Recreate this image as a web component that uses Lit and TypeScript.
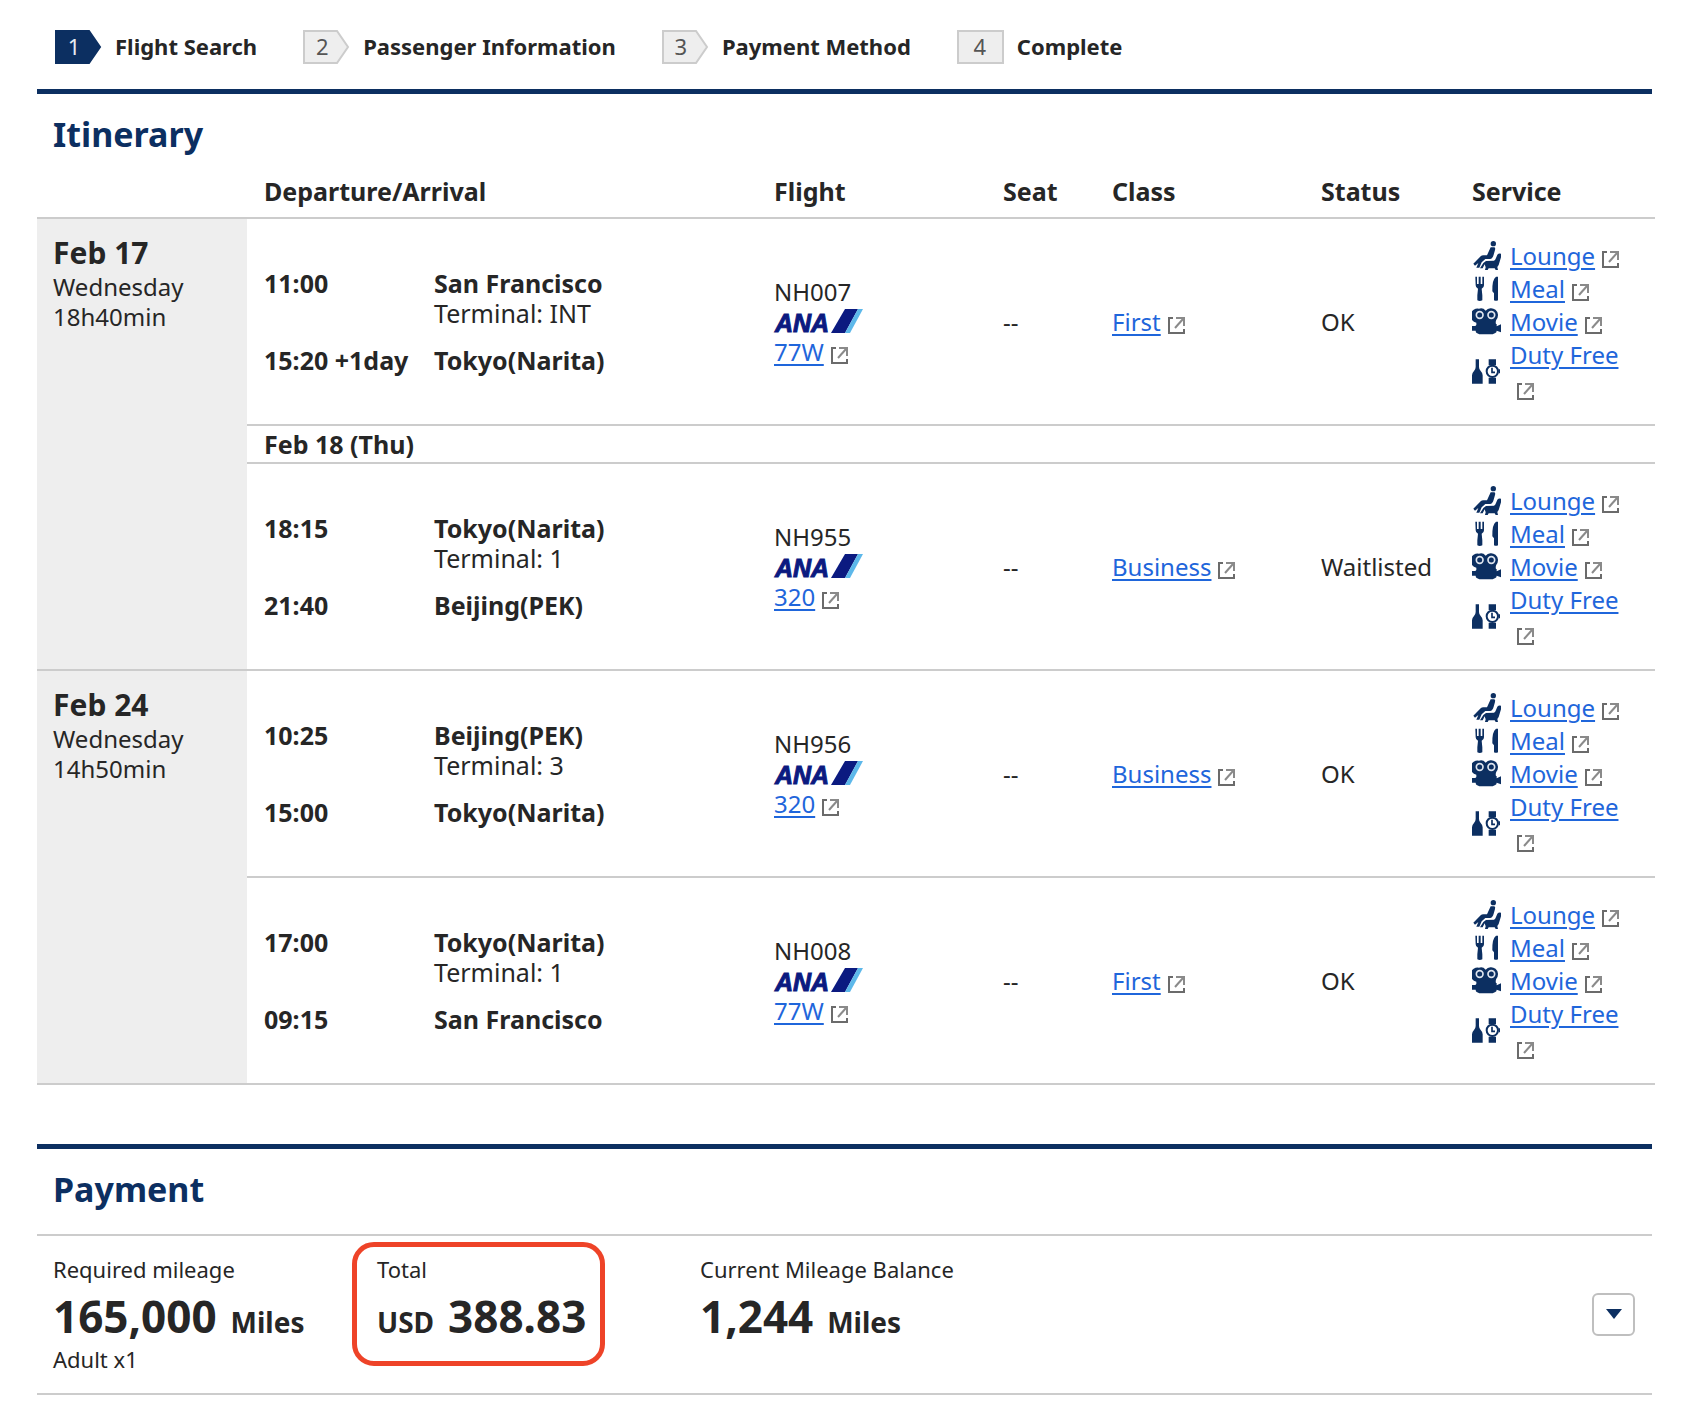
import { LitElement, html, css, svg, nothing } from "lit";
import { customElement, property } from "lit/decorators.js";

type IconName = "lounge" | "meal" | "movie" | "duty";

interface Flight {
  note?: string;
  depTime: string;
  depCity: string;
  terminal: string;
  arrTime: string;
  arrCity: string;
  number: string;
  aircraft: string;
  cabin: string;
  status: string;
}

interface Day {
  date: string;
  weekday: string;
  duration: string;
  flights: Flight[];
}

const STEPS = ["Flight Search", "Passenger Information", "Payment Method", "Complete"];

const SERVICES: { icon: IconName; label: string }[] = [
  { icon: "lounge", label: "Lounge" },
  { icon: "meal", label: "Meal" },
  { icon: "movie", label: "Movie" },
  { icon: "duty", label: "Duty Free" },
];

const DAYS: Day[] = [
  {
    date: "Feb 17", weekday: "Wednesday", duration: "18h40min",
    flights: [
      { depTime: "11:00", depCity: "San Francisco", terminal: "INT", arrTime: "15:20 +1day", arrCity: "Tokyo(Narita)", number: "NH007", aircraft: "77W", cabin: "First", status: "OK" },
      { note: "Feb 18 (Thu)", depTime: "18:15", depCity: "Tokyo(Narita)", terminal: "1", arrTime: "21:40", arrCity: "Beijing(PEK)", number: "NH955", aircraft: "320", cabin: "Business", status: "Waitlisted" },
    ],
  },
  {
    date: "Feb 24", weekday: "Wednesday", duration: "14h50min",
    flights: [
      { depTime: "10:25", depCity: "Beijing(PEK)", terminal: "3", arrTime: "15:00", arrCity: "Tokyo(Narita)", number: "NH956", aircraft: "320", cabin: "Business", status: "OK" },
      { depTime: "17:00", depCity: "Tokyo(Narita)", terminal: "1", arrTime: "09:15", arrCity: "San Francisco", number: "NH008", aircraft: "77W", cabin: "First", status: "OK" },
    ],
  },
];

/* Service pictograms, drawn on an 87 x 87 grid. */
const ICONS = {
  lounge: svg`
    <circle cx="64" cy="8" r="8"/>
    <path d="M56 19H67Q71 21 69 27L65 41Q62 53 54 54H40L29 64L22 80H13L19 66L9 74L4 68L26 46Q29 43 34 43H45Z"/>
    <path d="M24 82L34 66L42 60L66 59Q70 57 72 51L76 41Q80 36 87 38V49L80 72L76 78L78 87H71L68 82H50L47 87H39L41 79L38 70L32 82Z"/>`,
  meal: svg`
    <path d="M10 8h5v22h5V8h6v22h5V8h5v26q0 8-7 10l2 20v15q-8 4-15 0V64l2-20q-7-2-7-10z"/>
    <path d="M78 8v71q-6 3-12 0V58l-5-6Q60 16 72 8z"/>`,
  movie: svg`
    <path d="M21 5a19 19 0 0 1 20 6A19 19 0 1 1 73 38q-3 6-1 13h2v7l13-6v24l-13-5q0 5-4 7l-8 4H22l-8-4q-3-2-3-7H0V57h10l3-3v-7A21 21 0 0 1 21 5z"/>
    <circle cx="23" cy="24" r="10" fill="none" stroke="#dfe5ee" stroke-width="5"/>
    <circle cx="58" cy="24" r="10" fill="none" stroke="#dfe5ee" stroke-width="5"/>`,
  duty: svg`
    <path d="M11 7h10v23q0 7 5 12q6 6 6 13v25H0V55q0-7 6-13q5-5 5-12z"/>
    <path d="M50 7h22v18H50zM50 62h22v18H50z"/>
    <circle cx="61" cy="43" r="17" fill="#fff" stroke="#0c2f61" stroke-width="6"/>
    <path d="M80 37h4v12h-4z"/>
    <path d="M60 32v14h9" fill="none" stroke="#0c2f61" stroke-width="5"/>`,
};

@customElement("service-icon")
class ServiceIcon extends LitElement {
  static styles = css`
    :host { display: block; flex: none; width: 29px; height: 29px; }
    .glyph { display: block; width: 29px; height: 29px; fill: #0c2f61; }
  `;
  @property() name: IconName = "lounge";
  render() {
    return html`<svg class="glyph" viewBox="0 0 87 87" aria-hidden="true">${ICONS[this.name]}</svg>`;
  }
}

@customElement("ext-link")
class ExtLink extends LitElement {
  static styles = css`
    :host { display: inline; }
    .link { color: #1f66db; text-decoration: underline; text-decoration-thickness: 2px; text-underline-offset: 3px; }
    .mark { display: inline-block; width: 17px; height: 17px; margin-left: 7px; vertical-align: -3px; }
  `;
  @property() label = "";
  render() {
    return html`<a class="link" href="#">${this.label}</a><svg class="mark" viewBox="0 0 17 17" fill="none" aria-hidden="true">
      <path d="M5 1H1v15h15v-4" stroke="#6b6b6b" stroke-width="2"/>
      <path d="M8 1h8v8" stroke="#8a8a8a" stroke-width="2"/>
      <path d="M7 11l8-9" stroke="#8a8a8a" stroke-width="2"/>
    </svg>`;
  }
}

@customElement("app-root")
class AppRoot extends LitElement {
  static styles = css`
    :host {
      display: block;
      background: #fff;
      color: #262626;
      font-family: "Noto Sans", "Open Sans", sans-serif;
      font-size: 24px;
      line-height: 30px;
    }
    .page { padding: 30px 35px 8px 37px; }

    .steps { display: flex; gap: 46px; margin: 0 3px 25px 0; padding: 0 18px; list-style: none; font-size: 22px; font-weight: 700; }
    .step { display: flex; align-items: center; gap: 13px; height: 34px; line-height: 32px; }
    .badge { position: relative; width: 47px; height: 34px; display: flex; }
    .badge-shape { position: absolute; inset: 0; fill: #eee; stroke: #ccc; stroke-width: 2; }
    .badge-num { position: relative; width: 38px; text-align: center; font-weight: 400; color: #555; }
    .step.current .badge-shape { fill: #0c2f61; stroke: #0c2f61; }
    .step.current .badge-num { color: #e6ebf2; }
    .step:last-child .badge-num { width: 46px; }
    .step-label { padding-bottom: 2px; }

    .section { border-top: 5px solid #0c2f61; margin-right: 3px; }
    .title { margin: 0; padding: 17px 16px 0; font-size: 34px; line-height: 46px; color: #0c2f61; }

    .itinerary { width: 100%; table-layout: fixed; border-collapse: separate; border-spacing: 0; margin-bottom: 59px; }
    .c-day { width: 210px; }
    .c-flight { width: 229px; }
    .c-seat { width: 109px; }
    .c-class { width: 209px; }
    .c-status { width: 151px; }
    .c-service { width: 200px; }
    .itinerary th, .itinerary td { padding: 0 0 0 17px; text-align: left; border-bottom: 2px solid #ccc; }
    .itinerary .head { padding-top: 18px; padding-bottom: 10px; font-size: 25px; line-height: 32px; }
    .itinerary .day { padding: 15px 16px; background: #eee; vertical-align: top; font-weight: 400; }
    .date { display: block; font-size: 30px; line-height: 38px; font-weight: 700; }
    .line { display: block; }
    .itinerary .note { font-size: 25px; line-height: 36px; font-weight: 700; }
    .itinerary .service { padding: 20px 18px 20px 17px; }

    .legs { display: grid; grid-template-columns: 170px 1fr; row-gap: 17px; font-size: 25px; }
    .strong { font-weight: 700; white-space: nowrap; }
    .ana { display: block; width: 89px; height: 24px; margin: 2px 0 4px; overflow: visible; }
    .ana-text { font: italic 700 25px "Liberation Sans", sans-serif; }

    .services { margin: 0; padding: 0; list-style: none; line-height: 33px; }
    .service-row { display: flex; align-items: center; gap: 9px; }

    .summary { display: flex; align-items: center; border: solid #ccc; border-width: 2px 0; margin-top: 22px; padding: 18px 17px 19px 16px; }
    .figures { flex: 1; display: grid; grid-template-columns: 324px 323px 1fr; align-items: start; margin: 0; font-size: 22px; }
    .figure { justify-self: start; position: relative; }
    .figure dt { margin: 0; }
    .figure dd { margin: 0; }
    .figure .amount { display: flex; align-items: baseline; gap: 14px; margin: 8px 0 4px; font-weight: 700; font-size: 28px; line-height: 30px; white-space: nowrap; }
    .figure .ring { position: absolute; inset: -12px -19px -22px -25px; border: 5px solid #ee4328; border-radius: 22px; pointer-events: none; }
    .big { font-size: 44px; line-height: 48px; }
    .toggle { width: 43px; height: 43px; padding: 0; display: grid; place-items: center; background: #fff; border: 2px solid #bfbfbf; border-radius: 6px; }
    .caret { width: 16px; height: 10px; fill: #0c2f61; }
  `;

  private renderStep(label: string, i: number) {
    const last = i === STEPS.length - 1;
    return html`<li class="step ${i === 0 ? "current" : ""}">
      <span class="badge">
        <svg class="badge-shape" viewBox="0 0 47 34" width="47" height="34" aria-hidden="true">
          <path d=${last ? "M1 1H46V33H1Z" : "M1 1H34L45 17L34 33H1Z"}/>
        </svg>
        <span class="badge-num">${i + 1}</span>
      </span>
      <span class="step-label">${label}</span>
    </li>`;
  }

  private renderFlight(f: Flight) {
    return html`
      <td>
        <div class="legs">
          <span class="strong">${f.depTime}</span>
          <span><span class="line strong">${f.depCity}</span><span class="line">Terminal: ${f.terminal}</span></span>
          <span class="strong">${f.arrTime}</span>
          <span class="strong">${f.arrCity}</span>
        </div>
      </td>
      <td>
        <span class="line">${f.number}</span>
        <svg class="ana" viewBox="0 0 89 24" role="img" aria-label="ANA">
          <text class="ana-text" x="1" y="23" fill="#0b1a80" stroke="#0b1a80" stroke-width="1">ANA</text>
          <path d="M71 0H84L71 24H57Z" fill="#0b1a80"/>
          <path d="M84 0H89L76 24H71Z" fill="#5db8ea"/>
        </svg>
        <span class="line"><ext-link label=${f.aircraft}></ext-link></span>
      </td>
      <td>--</td>
      <td><ext-link label=${f.cabin}></ext-link></td>
      <td>${f.status}</td>
      <td class="service">
        <ul class="services">
          ${SERVICES.map((s) => html`<li class="service-row"><service-icon name=${s.icon}></service-icon><span><ext-link label=${s.label}></ext-link></span></li>`)}
        </ul>
      </td>`;
  }

  private renderDay(d: Day) {
    const span = d.flights.reduce((n, f) => n + (f.note ? 2 : 1), 0);
    return html`<tbody>${d.flights.map((f, i) => html`
      ${f.note ? html`<tr><td class="note" colspan="6">${f.note}</td></tr>` : nothing}
      <tr>
        ${i === 0 ? html`<th class="day" scope="rowgroup" rowspan=${span}>
          <span class="date">${d.date}</span><span class="line">${d.weekday}</span><span class="line">${d.duration}</span>
        </th>` : nothing}
        ${this.renderFlight(f)}
      </tr>`)}</tbody>`;
  }

  render() {
    return html`<main class="page">
      <ol class="steps">${STEPS.map((s, i) => this.renderStep(s, i))}</ol>

      <section>
        <div class="section"><h2 class="title">Itinerary</h2></div>
        <table class="itinerary">
          <colgroup>
            <col class="c-day"><col><col class="c-flight"><col class="c-seat"><col class="c-class"><col class="c-status"><col class="c-service">
          </colgroup>
          <thead><tr>
            <th class="head"></th>
            ${["Departure/Arrival", "Flight", "Seat", "Class", "Status", "Service"].map((h) => html`<th class="head" scope="col">${h}</th>`)}
          </tr></thead>
          ${DAYS.map((d) => this.renderDay(d))}
        </table>
      </section>

      <section class="section">
        <h2 class="title">Payment</h2>
        <div class="summary">
          <dl class="figures">
            <div class="figure">
              <dt>Required mileage</dt>
              <dd class="amount"><span class="big">165,000</span><span>Miles</span></dd>
              <dd>Adult x1</dd>
            </div>
            <div class="figure">
              <dt>Total</dt>
              <dd class="amount"><span>USD</span><span class="big">388.83</span></dd>
              <dd class="ring" aria-hidden="true"></dd>
            </div>
            <div class="figure">
              <dt>Current Mileage Balance</dt>
              <dd class="amount"><span class="big">1,244</span><span>Miles</span></dd>
            </div>
          </dl>
          <button class="toggle" type="button" aria-label="Show payment details">
            <svg class="caret" viewBox="0 0 16 10" aria-hidden="true"><path d="M0 0H16L8 10Z"/></svg>
          </button>
        </div>
      </section>
    </main>`;
  }
}
